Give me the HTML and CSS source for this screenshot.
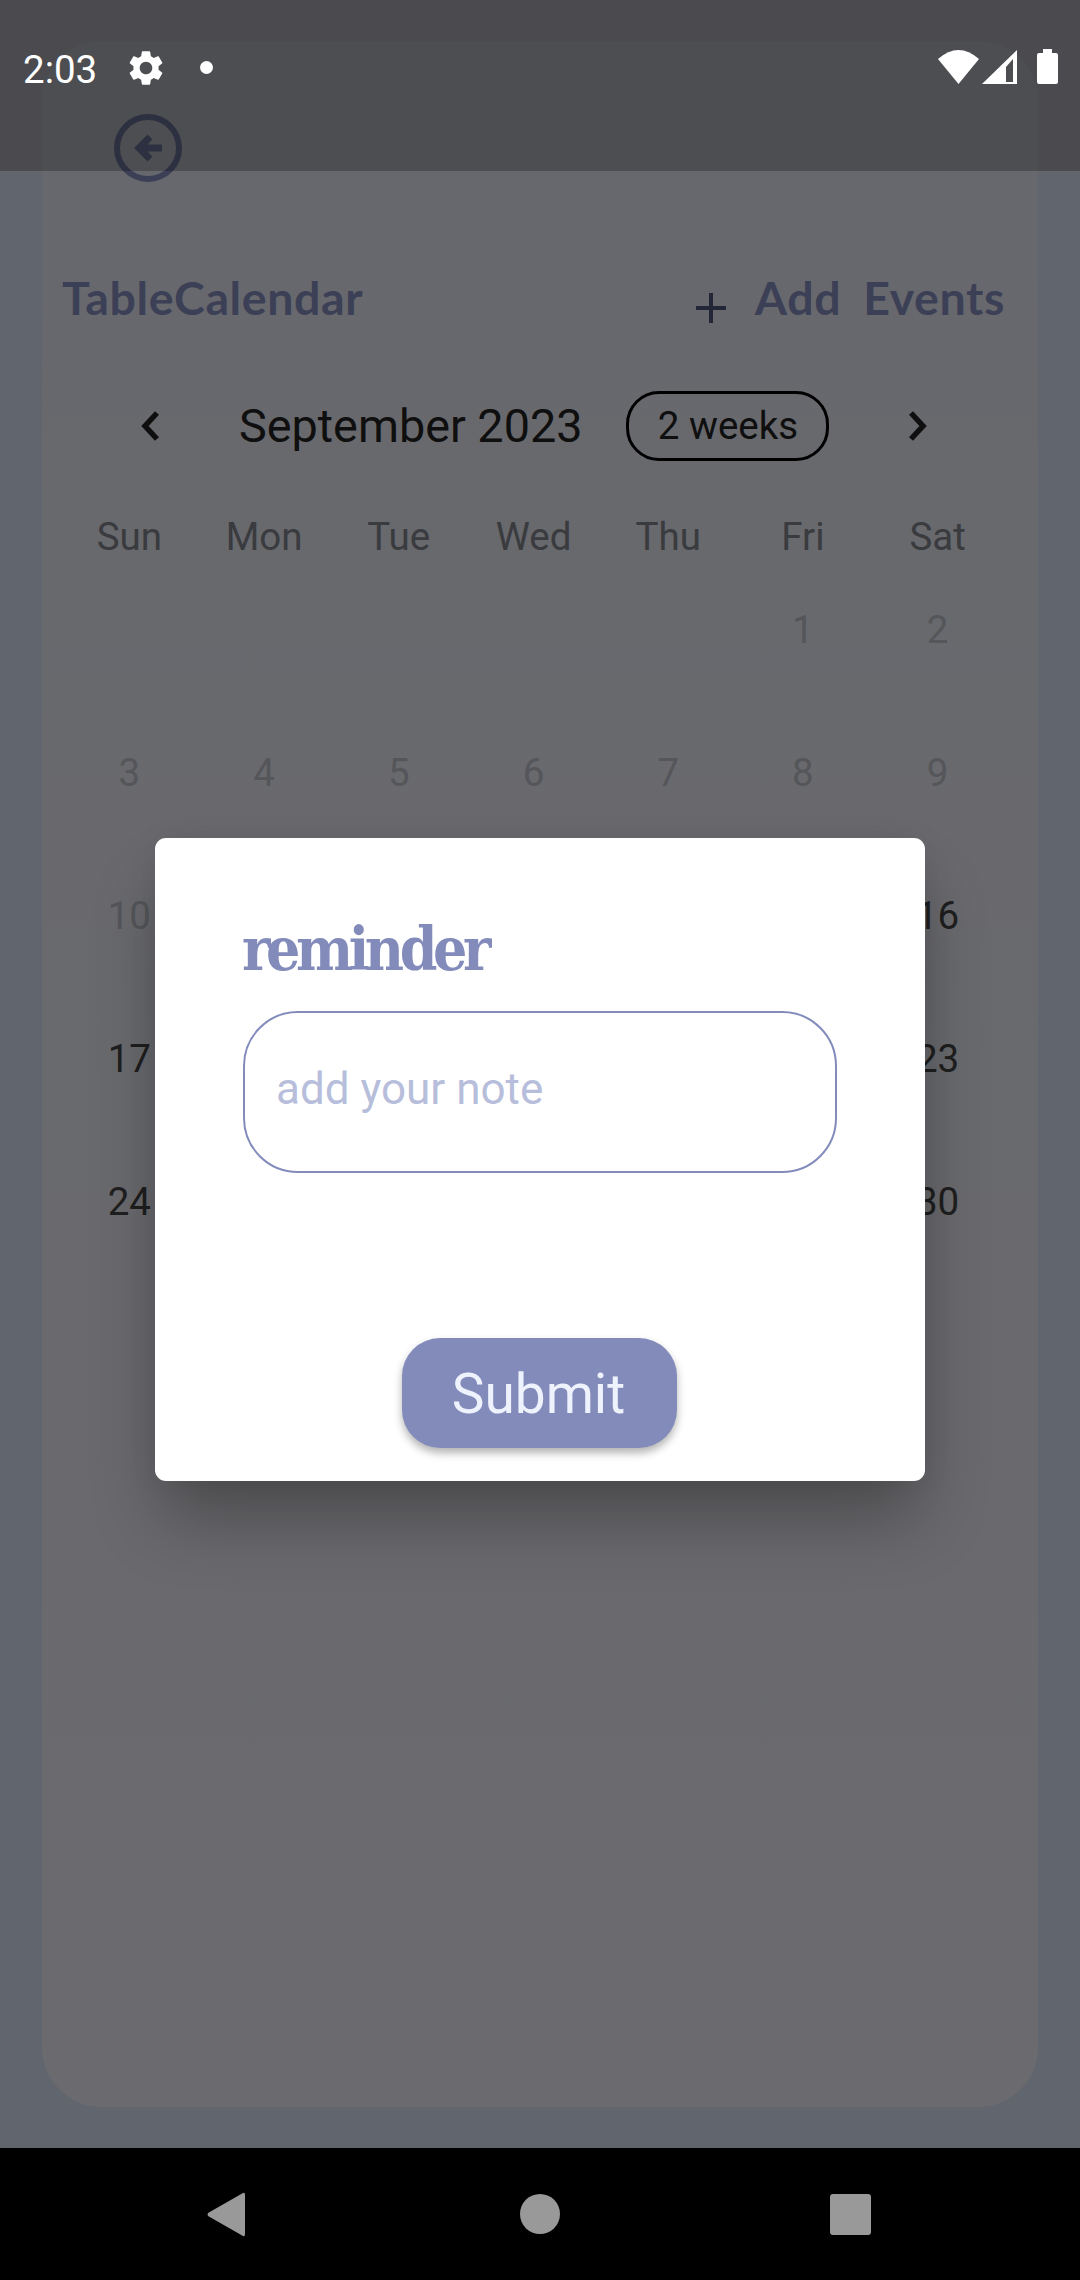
FILE: index.html
```html
<!DOCTYPE html>
<html>
	<head>
		<meta charset="UTF-8">
		<meta name="viewport" content="width=device-width, initial-scale=1.0">
		<title>TableCalendar</title>
		<link rel="stylesheet" href="styles.css">
	</head>
	<body>
		<!-- page behind the dialog -->
		<div class="app">
			<div class="card">
				<svg class="back" viewBox="0 0 68 68" fill="none" stroke="#838bbb" stroke-width="6">
					<circle cx="34" cy="34" r="31"/>
					<path d="M48 34H26M36 23L25 34L36 45" stroke-width="7"/>
				</svg>

				<div class="head">
					<span class="head-title">TableCalendar</span>
					<div class="head-add">
						<svg class="plus" viewBox="0 0 30 30" fill="none" stroke="#4d5478" stroke-width="4">
							<path d="M15 0V30M0 15H30"/>
						</svg>
						<span class="head-link">Add</span>
						<span class="head-link">Events</span>
					</div>
				</div>

				<div class="month">
					<svg class="chev" viewBox="0 0 20 32" fill="none" stroke="#222" stroke-width="5.5">
						<path d="M17 3L5 16L17 29"/>
					</svg>
					<span class="month-name">September 2023</span>
					<span class="format">2 weeks</span>
					<svg class="chev chev-next" viewBox="0 0 20 32" fill="none" stroke="#222" stroke-width="5.5">
						<path d="M3 3L15 16L3 29"/>
					</svg>
				</div>

				<div class="week">
					<span>Sun</span><span>Mon</span><span>Tue</span><span>Wed</span><span>Thu</span><span>Fri</span><span>Sat</span>
				</div>

				<div class="days">
					<span></span><span></span><span></span><span></span><span></span><span class="past">1</span><span class="past">2</span>
					<span class="past">3</span><span class="past">4</span><span class="past">5</span><span class="past">6</span><span class="past">7</span><span class="past">8</span><span class="past">9</span>
					<span class="past">10</span><span></span><span></span><span></span><span></span><span></span><span>16</span>
					<span>17</span><span></span><span></span><span></span><span></span><span></span><span>23</span>
					<span>24</span><span></span><span></span><span></span><span></span><span></span><span>30</span>
				</div>
			</div>
		</div>

		<!-- barrier and reminder dialog -->
		<div class="scrim">
			<div class="dialog">
				<h2 class="dialog-title">reminder</h2>
				<input class="note" type="text" placeholder="add your note">
				<button class="submit" type="button">Submit</button>
			</div>
		</div>

		<div class="status">
			<span class="clock">2:03</span>
			<svg class="gear" viewBox="0 0 24 24" fill="#fff">
				<path d="M19.14 12.94c.04-.3.06-.61.06-.94 0-.32-.02-.64-.07-.94l2.03-1.58c.18-.14.23-.41.12-.61l-1.92-3.32c-.12-.22-.37-.29-.59-.22l-2.39.96c-.5-.38-1.03-.7-1.62-.94l-.36-2.54c-.04-.24-.24-.41-.48-.41h-3.84c-.24 0-.43.17-.47.41l-.36 2.54c-.59.24-1.13.57-1.62.94l-2.39-.96c-.22-.08-.47 0-.59.22L2.74 8.87c-.12.21-.08.47.12.61l2.03 1.58c-.05.3-.09.63-.09.94s.02.64.07.94l-2.03 1.58c-.18.14-.23.41-.12.61l1.92 3.32c.12.22.37.29.59.22l2.39-.96c.5.38 1.03.7 1.62.94l.36 2.54c.05.24.24.41.48.41h3.84c.24 0 .44-.17.47-.41l.36-2.54c.59-.24 1.13-.56 1.62-.94l2.39.96c.22.08.47 0 .59-.22l1.92-3.32c.12-.22.07-.47-.12-.61l-2.01-1.58zM12 15.6c-1.98 0-3.6-1.62-3.6-3.6s1.62-3.6 3.6-3.6 3.6 1.62 3.6 3.6-1.62 3.6-3.6 3.6z"/>
			</svg>
			<span class="dot"></span>
			<svg class="wifi" viewBox="0 0 41 34" fill="#fff">
				<path d="M0 9Q20.500 -9 41 9L20.500 34Z"/>
			</svg>
			<svg class="signal" viewBox="0 0 35 34" fill="#fff" fill-rule="evenodd">
				<path d="M35 0V34H0ZM24 32H31V9L24 17Z"/>
			</svg>
			<svg class="battery" viewBox="0 0 21 35" fill="#fff">
				<path d="M6 0H15V4H19Q21 4 21 6V33Q21 35 19 35H2Q0 35 0 33V6Q0 4 2 4H6Z"/>
			</svg>
		</div>

		<div class="nav">
			<svg class="nav-back" viewBox="0 0 38 45" fill="#999">
				<path d="M36 1Q38 0 38 3V42Q38 45 36 44L1 24Q0 22.500 1 21Z"/>
			</svg>
			<span class="nav-home"></span>
			<span class="nav-recent"></span>
		</div>
	</body>
</html>
```

FILE: styles.css
```css
* {
	box-sizing: border-box;
}
html, body {
	margin: 0;
	height: 2280px;
}
body {
	position: relative;
	display: flex;
	flex-direction: column;
	overflow: hidden;
	font-family: Roboto, sans-serif;
	background-color: #d3dcef;
}

/* page behind the barrier */
.app {
	flex: 1;
	padding: 41px 42px;
	background: linear-gradient(#dadde7 171px, #d3dcef 171px);
}
.card {
	height: 100%;
	padding: 73px 33px 0 20px;
	border-radius: 60px;
	background: linear-gradient(#e0e2ed, #eaeaf1);
}
.back {
	display: block;
	width: 68px;
	height: 68px;
	margin-left: 52px;
}
.head {
	display: flex;
	justify-content: space-between;
	height: 50px;
	margin-top: 90px;
	font-family: Lato, sans-serif;
	font-weight: bold;
	font-size: 46.5px;
	letter-spacing: 0.6px;
	line-height: 50px;
	color: #838bbb;
}
.head-add {
	display: flex;
}
.head-link {
	margin-left: 22px;
}
.plus {
	width: 30px;
	height: 30px;
	margin-top: 21px;
	margin-right: 7px;
}
.month {
	display: flex;
	align-items: center;
	height: 70px;
	margin-top: 69px;
	padding-left: 78px;
}
.chev {
	width: 20px;
	height: 32px;
}
.chev-next {
	margin-left: 79px;
}
.month-name {
	margin-left: 79px;
	font-size: 46.75px;
	color: #222;
}
.format {
	width: 203px;
	height: 70px;
	margin-left: 44px;
	border: 3px solid #000;
	border-radius: 33px;
	text-align: center;
	font-size: 38.5px;
	line-height: 64px;
	color: #222;
}
.week, .days {
	display: grid;
	grid-template-columns: repeat(7, 1fr);
	text-align: center;
	font-size: 38.5px;
}
.week {
	height: 41px;
	margin-top: 55px;
	line-height: 41px;
	color: #7e8089;
}
.days {
	grid-auto-rows: 143px;
	margin-top: 1px;
	line-height: 143px;
	color: #444;
}
.past {
	color: #b9bbc4;
}

/* barrier + dialog */
.scrim {
	position: absolute;
	top: 0;
	left: 0;
	width: 100%;
	height: 100%;
	display: flex;
	align-items: center;
	justify-content: center;
	padding-top: 38px;
	background-color: rgba(0, 0, 0, 0.54);
}
.dialog {
	display: flex;
	flex-direction: column;
	width: 770px;
	height: 643px;
	padding: 71px 88px 0;
	border-radius: 11px;
	background-color: white;
	box-shadow: 0 44px 70px -8px rgba(0, 0, 0, 0.3), 0 0 30px rgba(0, 0, 0, 0.06);
}
.dialog-title {
	margin: 0 0 0 -1px;
	height: 102px;
	font-family: "DejaVu Serif", serif;
	font-stretch: condensed;
	font-weight: bold;
	font-size: 60px;
	letter-spacing: -4.4px;
	line-height: 80px;
	color: #838bbb;
}
.note {
	width: 594px;
	height: 162px;
	padding: 0 31px 6px;
	border: 2.75px solid #838bbb;
	border-radius: 55px;
	outline: none;
	font-family: Roboto, sans-serif;
	font-size: 44px;
	color: #222;
}
.note::placeholder {
	color: #b7bedb;
	opacity: 1;
}
.submit {
	align-self: center;
	width: 275px;
	height: 110px;
	margin-top: 165px;
	margin-right: 1px;
	padding: 2px 8px 0 6px;
	border: none;
	border-radius: 38px;
	background-color: #838bbb;
	box-shadow: 0 5px 8px rgba(0, 0, 0, 0.3);
	font-family: Roboto, sans-serif;
	font-size: 55px;
	color: #eef2fc;
}

/* system bars */
.status {
	position: absolute;
	top: 0;
	left: 0;
	width: 100%;
	height: 171px;
	display: flex;
	align-items: flex-start;
	padding: 49px 22px 0 23px;
	background-color: rgba(0, 0, 0, 0.25);
}
.clock {
	width: 102px;
	font-size: 38.5px;
	line-height: 36px;
	margin-top: 3px;
	color: #fff;
}
.gear {
	width: 42px;
	height: 42px;
	margin-top: -2px;
}
.dot {
	width: 13px;
	height: 13px;
	margin: 12px auto 0 33px;
	border-radius: 50%;
	background-color: #fff;
}
.wifi {
	width: 41px;
	height: 34px;
	margin-top: 1px;
}
.signal {
	width: 35px;
	height: 34px;
	margin: 1px 0 0 3px;
}
.battery {
	width: 21px;
	height: 35px;
	margin-left: 20px;
}
.nav {
	position: relative;
	height: 132px;
	display: flex;
	align-items: center;
	padding-left: 207px;
	background-color: black;
}
.nav-back {
	width: 38px;
	height: 45px;
}
.nav-home {
	width: 40px;
	height: 40px;
	margin-left: 275px;
	border-radius: 50%;
	background-color: #999;
}
.nav-recent {
	width: 41px;
	height: 41px;
	margin-left: 270px;
	border-radius: 3px;
	background-color: #999;
}
```
